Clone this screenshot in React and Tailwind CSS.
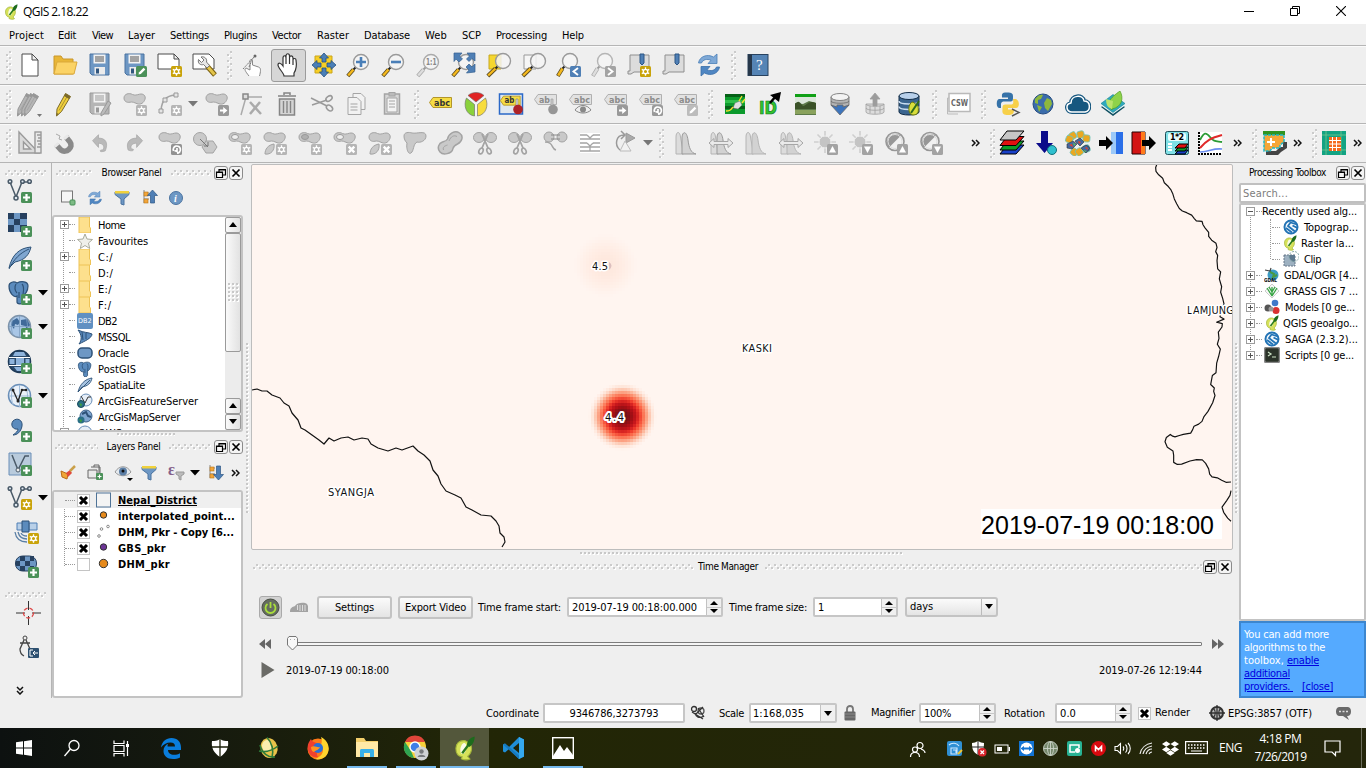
import React, { useLayoutEffect, useRef, useState } from "react";
import { FaDropbox } from "react-icons/fa";

/* Text whose advance is tuned so that it fills a given width */
function T({ w, className = "", children }) {
  const ref = useRef(null);
  const [ls, setLs] = useState(0);
  useLayoutEffect(() => {
    if (!w) return;
    const n = ref.current.getBoundingClientRect().width;
    setLs((w - n) / String(children).length);
  }, []);
  return (
    <span ref={ref} className={"inline-block shrink-0 self-center whitespace-pre " + className} style={{ letterSpacing: ls + "px" }}>
      {children}
    </span>
  );
}

const S = ({ s = 26, w, h, vb, className = "", children }) => (
  <svg width={w || s} height={h || s} viewBox={vb || `0 0 ${w || s} ${h || s}`} className={"shrink-0 " + className} fill="none">
    {children}
  </svg>
);

let gid = 0;
function Grip({ w, h, className = "" }) {
  const [id] = useState(() => "grip" + gid++);
  return (
    <S w={w} h={h} className={className}>
      <pattern id={id} width="6" height="6" patternUnits="userSpaceOnUse">
        <path d="M1 4h2v2H1zM4 1h2v2H4z" fill="#fff" />
        <path d="M0 3h2v2H0zM3 0h2v2H3z" fill="#cbcbcb" />
      </pattern>
      <rect width={w} height={h} fill={`url(#${id})`} />
    </S>
  );
}
function Dots({ w, h, className = "" }) {
  const [id] = useState(() => "dots" + gid++);
  return (
    <S w={w} h={h} className={className}>
      <pattern id={id} width="4" height="4" patternUnits="userSpaceOnUse">
        <path d="M1 1h2v2H1z" fill="#fff" />
        <path d="M0 0h2v2H0z" fill="#c8c8c8" />
      </pattern>
      <rect width={w} height={h} fill={`url(#${id})`} />
    </S>
  );
}
const VGrip = () => <div className="flex h-full w-[14px] shrink-0 items-center justify-center"><Grip w={5} h={29} /></div>;
const FirstGrip = () => <div className="flex h-full w-[12px] shrink-0 items-center justify-end"><Grip w={6} h={29} /></div>;
const More = ({ className = "" }) => (
  <S w={9} h={8} className={className}><path d="M1 1l3 3-3 3M5 1l3 3-3 3" stroke="#111" strokeWidth="1.5" /></S>
);
const Down = ({ c = "#000", className = "" }) => (
  <S w={10} h={6} className={className}><path d="M0 0h10L5 5.5z" fill={c} /></S>
);

/* ---------- toolbar icon parts ---------- */
const GR = "#a3a3a3", GF = "#c9c9c9", BL = "#6d97c4";
const glyphs = {
  star: <g stroke="#fff" strokeWidth="1.300"><circle cx="19.500" cy="19.500" r="2.200" /><path d="M19.500 15.300v2M19.500 21.700v2M15.800 17.400l1.800 1M21.400 20.600l1.800 1M23.200 17.400l-1.800 1M17.600 20.600l-1.800 1" /></g>,
  arrow: <path d="M16 18.400h3.200v-2.400l4.200 3.500-4.200 3.500v-2.400H16z" fill="#fff" />,
  x: <path d="M16.700 16.700l5.600 5.600M22.300 16.700l-5.600 5.600" stroke="#fff" strokeWidth="2.400" />,
  rot: <path d="M16.500 21a3.600 3.600 0 1 1 3.500 2.200M20 18v3.500l-2.500-1" stroke="#fff" strokeWidth="1.700" />,
  up: <path d="M16 22.500h7L19.500 16z" fill="#fff" />,
  down: <path d="M16 16.500h7L19.500 23z" fill="#fff" />,
  pencil: <path d="M16.500 22.500l.6-2.200 4.500-4.500 1.700 1.700-4.500 4.500z" fill="#fff" />,
  plus: <path d="M19.500 16v7M16 19.500h7" stroke="#fff" strokeWidth="2.200" />,
  lt: <path d="M22 16l-4.500 3.500L22 23" stroke="#fff" strokeWidth="1.900" />,
  gt: <path d="M17 16l4.500 3.500L17 23" stroke="#fff" strokeWidth="1.900" />,
};
const Badge = ({ k, c = GR }) => (
  <g><rect x="14" y="14" width="11" height="11" rx="1.500" fill={c} />{glyphs[k]}</g>
);
const Blob = () => <path d="M2 7c0-4 5-5.500 8.500-3.500 2.500 1 4 .5 7-.3 4-1 6.500 1.800 5.500 5s-4 6-8 4.500c-3-1.300-4.500-2-7-1.500C4.500 12 2 10 2 7z" fill={GF} stroke={GR} />;
const Lens = ({ c = "#9a9a9a", h = "#f5b91d", x = 15, y = 10 }) => (
  <g>
    <path d={`M${x - 5} ${y + 5}l-5 5`} stroke={h === "g" ? "#999" : "#222"} strokeWidth="2" />
    <path d={`M${x - 7.500} ${y + 7.500}L1.800 24`} stroke={h === "g" ? "#aaa" : "#5a4a20"} strokeWidth="4" />
    <path d={`M${x - 7.500} ${y + 7.500}L2.200 23.500`} stroke={h === "g" ? "#ddd" : h} strokeWidth="2.400" />
    <circle cx={x} cy={y} r="7.500" fill="#f4f4f4" fillOpacity=".85" stroke={c} strokeWidth="1.400" />
  </g>
);
const Abc = ({ t = "abc", y }) => (
  <g>
    <path d="M1.500 8.500L5 3.500h18.500v10H5z" fill={y ? "#f6dc43" : "#e2e2e2"} stroke={y ? "#b3962a" : "#b0b0b0"} />
    <text x="6" y="11.500" fontSize="9" fontWeight="700" fontFamily="DejaVu Sans, sans-serif" textLength={t === "abc" ? 16 : 11} lengthAdjust="spacingAndGlyphs" fill={y ? "#333" : "#8b8b8b"}>{t}</text>
  </g>
);
const Floppy = ({ g }) => (
  <g>
    <path d="M3 2h19v21H5l-2-2z" fill={g ? "#b5b5b5" : BL} stroke={g ? "#999" : "#4b73a0"} />
    <rect x="6.500" y="2.500" width="12" height="9" fill="#f2f2f2" />
    <path d="M8 5h9M8 7h9M8 9h9" stroke={g ? "#999" : "#555"} />
    <rect x="7.500" y="15" width="10.500" height="7.500" fill="#ececec" /><rect x="9" y="16.500" width="3" height="5" fill={g ? "#999" : "#31567f"} />
  </g>
);
const Pencil = ({ f = "#f0cf3c", s = "#7b6a2b", dx = 0 }) => (
  <g transform={`translate(${dx} 0)`}>
    <path d="M5 18L13.500 2.500l5 3L9.500 20.500 4.500 25z" fill={f} stroke={s} />
    <path d="M16 4L7 19.500" stroke={s} strokeOpacity=".6" /><path d="M13.500 2.500l5 3-1.500 2.500-5-3zM4.500 25l.3-3 1.900 1z" fill={s} />
  </g>
);
const Scissor = () => (
  <g stroke={GR} fill={GF}>
    <ellipse cx="7" cy="7.500" rx="5.500" ry="5" /><ellipse cx="19" cy="7.500" rx="5.500" ry="5" />
    <path d="M10 4l6 14M16 4l-6 14" strokeWidth="1.800" fill="none" />
    <g fill="none" strokeWidth="1.600"><ellipse cx="9" cy="21" rx="2" ry="3" transform="rotate(25 9 21)" /><ellipse cx="17" cy="21" rx="2" ry="3" transform="rotate(-25 17 21)" /></g>
  </g>
);
const Bell = ({ arrows, edge }) => (
  <g>
    <path d="M3 24V7c0-6 4-6 4.500 0l3 17z" fill="#dcdcdc" stroke="#b4b4b4" />
    <path d="M9 24V7c1-7 5-5 6 3 1 8 3 13 8 14z" fill="#d2d2d2" stroke={edge ? "#999" : "#b4b4b4"} />
    {arrows && <path d="M1 13l5-4.500v3h14v-3l5 4.500-5 4.500v-3H6v3z" fill="#eaeaea" stroke="#a6a6a6" />}
  </g>
);
const Sun = () => (
  <g><path d="M12 1v22M1 12h22M4.500 4.500l15 15M19.500 4.500l-15 15" stroke="#cfcfcf" strokeWidth="1.600" /><circle cx="12" cy="12" r="6" fill="#c4c4c4" stroke="#efefef" /></g>
);
const Contrast = () => (
  <g><circle cx="12" cy="11.500" r="9" fill="#f1f1f1" stroke="#969696" strokeWidth="1.600" /><path d="M5.500 18A9 9 0 0 1 18 5.500z" fill="#979797" /><circle cx="12" cy="11.500" r="7" stroke="#ddd" /></g>
);
const Refresh = ({ s = 26 }) => (
  <svg width={s} height={s} viewBox="0 0 26 26" fill="none" className="shrink-0">
    <path d="M2.500 11C3.500 4.500 11 1.500 17.500 5L21 2v9.500h-9l3-3.200C11 6.500 7 7.500 5.500 11z" fill="#7fa9d6" stroke="#4a7fb8" strokeWidth=".8" />
    <path d="M23.500 15C22.500 21.500 15 24.500 8.500 21L5 24v-9.500h9l-3 3.200c4 1.800 8 .8 9.500-2.700z" fill="#4f86c2" stroke="#3a6ea8" strokeWidth=".8" />
  </svg>
);
const Sheet = () => <path d="M4 3h19v17H8l-3 2H2v-3h2z" fill="#dcdcdc" stroke="#8f8f8f" />;
const VShape = ({ c = "#4a5a68" }) => (
  <g stroke={c} strokeWidth="1.500" fill="#dfe8f0"><path d="M3 4l6 15L15 4h7" fill="none" /><circle cx="3" cy="3.500" r="1.800" /><circle cx="9" cy="20" r="2" /><circle cx="15.500" cy="3.500" r="1.800" /><circle cx="22.500" cy="3.500" r="1.800" /></g>
);
const Qgis = ({ s = 16 }) => (
  <svg width={s} height={s} viewBox="0 0 16 16" fill="none" className="shrink-0">
    <path d="M8.500 3C4.500 2.500 2.500 5 2.500 8s1.500 5 4 5.300L6 14.500c2 1 4 1 5.500.2L10 13c2.500-2 3-5 1.800-8z" fill="#d6e25a" stroke="#a3b53a" strokeWidth=".7" />
    <ellipse cx="7.300" cy="8" rx="1.900" ry="3.600" fill="#f9fbe6" transform="rotate(12 7.300 8)" />
    <path d="M6.500 11L12.500 3" stroke="#2a7a1e" strokeWidth="1.500" /><path d="M9.500 5.500C10 2.500 12 1 14.500.3 14.500 3 13.500 5.500 11 7z" fill="#1d6b1d" />
  </svg>
);
const Elephant = () => (
  <g fill="#5b8bbd" stroke="#2d5177" strokeWidth="1.200"><path d="M2 6c0-4 5-5 8-3 4-2 11-2 11 3s-3 9-5 9v7c-1 3-6 2-6 0v-6c-3 2-8-3-8-10z" /><path d="M9 4c-2 3-1 7 1 9M15 4c3 3 1 8 1 11M12 12v6" fill="none" /></g>
);

const row1 = [
  <path d="M5 2h10l6 6v16H5zM15 2v6h6" fill="#fff" stroke="#4a4a4a" />,
  <g><path d="M2 22V4h7l2 3h10v15z" fill="#e8b637" stroke="#c9962a" /><path d="M2 22l3-12h20l-3 12z" fill="#fbd366" stroke="#dba93a" /></g>,
  <Floppy />,
  <g><Floppy /><Badge k="pencil" c="#4b9159" /></g>,
  <g><path d="M1 2h16l5 5v10H1zM17 2v5h5" fill="#fff" stroke="#4a4a4a" /><Badge k="star" c="#c9a30a" /></g>,
  <g><path d="M1 2h16l5 5v10H1z" fill="#fff" stroke="#4a4a4a" /><path d="M15 14l8 9" stroke="#7a6010" strokeWidth="5" /><path d="M15.500 14.500l7 8" stroke="#e3c44a" strokeWidth="3" /><path d="M9 5l3 3-2.500 2.500-3-3c-1 4 2 6 5 5l3.500 3.500 2.500-2.500-3-3.500c1-3-2-6-5.500-5z" fill="#e6e6e6" stroke="#777" /></g>,
];
const row1b = [
  <g><path d="M8 24c-4-5-5-7-3-8l4 2V9c0-2 2-2 2.500 0v4l6 2c3 1 2 5 1 9" fill="#fff" stroke="#888" /><path d="M2 17L14 4M8 15l4-9" stroke="#777" strokeDasharray="2 1" /><circle cx="14" cy="4" r="1.500" fill="#666" /></g>,
  <path d="M8 24c0-3-6-8-6-11s3-2 5 1V6c0-3 3-3 3 0V4c0-3 3.500-3 3.500 0v2c0-3 3.500-2.500 3.500 0v2c0-2 3-2 3 0 1 6 0 10-2 13v3zM10 6v6M13.500 6v6M17 8v5" fill="#fff" stroke="#333" strokeWidth="1.200" />,
  <g><path d="M4 4h17v17H4z" fill="#f7cf25" stroke="#caa51a" /><path d="M13 1l4.500 5H15v4H11V6H8.500zM13 25l-4.500-5H11v-4h4v4h2.500zM1 13l5-4.500V11h4v4H6v2.500zM25 13l-5 4.500V15h-4v-4h4V8.500z" fill="#4a7fb8" stroke="#27517f" strokeWidth=".8" /></g>,
  <g><Lens /><path d="M15 5v10M10 10h10" stroke="#4a7fb8" strokeWidth="2.600" /></g>,
  <g><Lens /><path d="M10 10h10" stroke="#4a7fb8" strokeWidth="2.600" /></g>,
  <g><Lens c="#aaa" h="g" /><text x="10" y="13" fontSize="8" fontWeight="700" fill="#888" fontFamily="DejaVu Sans, sans-serif" textLength="10.500" lengthAdjust="spacingAndGlyphs">1:1</text></g>,
  <g><Lens /><path d="M3 1h8L8.500 4l3 3-3.500 3-3-3L3 9.500zM24 1h-8l2.500 3-3 3L18 9.500l3-3L24 9zM24 20v-8l-3 3-3-3-3 3 3 3-2.500 3z" fill="#4f7fb5" stroke="#33608f" strokeWidth=".7" /></g>,
  <g><path d="M3 3h12v14H3z" fill="#f6d72f" stroke="#c6a720" /><Lens x={17} y={9} /></g>,
  <g><path d="M3 3h12v14H3z" fill="#f6f6f6" stroke="#999" /><Lens x={17} y={9} /></g>,
  <g><Lens x={14} y={9} /><Badge k="lt" c="#4f7fb5" /></g>,
  <g><Lens x={14} y={9} c="#b5b5b5" h="g" /><Badge k="gt" /></g>,
  <g><Sheet /><path d="M14 2h4v9l-2 2-2-2z" fill="#4f7fb5" stroke="#2d5685" /><Badge k="star" c="#c9a30a" /></g>,
  <g><Sheet /><path d="M14 2h4v9l-2 2-2-2z" fill="#4f7fb5" stroke="#2d5685" /></g>,
];
const help = <g><rect x="3" y="2.500" width="20" height="21" fill="#5584b5" stroke="#28425f" /><path d="M3 2.500h4v21H3z" fill="#26374a" /><text x="11" y="18" fontSize="15" fill="#fff" fontFamily="Liberation Serif, serif">?</text></g>;

const row2 = [
  <g><Pencil f="#b5b5b5" s="#979797" dx={-4} /><Pencil f="#b5b5b5" s="#979797" dx={0} /><Pencil f="#b5b5b5" s="#979797" dx={3} /><path d="M20 23h5l-2.500 3z" fill="#777" /></g>,
  <Pencil />,
  <g><Floppy g /><path d="M14 22L21 10l3 2-7 11-3 2z" fill="#bbb" stroke="#999" /></g>,
  <g><Blob /><Badge k="star" c="#b5b5b5" /></g>,
];
const lineStar = <g><path d="M4 19C5 9 9 5 18 4" stroke={GR} strokeWidth="1.500" /><g fill="#e5e5e5" stroke="#999"><path d="M2 18h4v4H2zM6 7h4v4H6zM17 2h4v4h-4z" /></g><Badge k="star" c="#b5b5b5" /></g>;
const row2b = [
  <g><Blob /><Badge k="arrow" c="#999" /></g>,
  <g stroke="#aaa" strokeWidth="1.500"><path d="M2 24L7 6M9 6h14" /><rect x="4" y="3" width="5" height="5" fill="#ddd" stroke="#888" /><path d="M11 11l11 12M21 11L11 23" strokeWidth="2.500" /></g>,
  <g stroke="#858585" strokeWidth="1.500"><path d="M4 5h18M10 4V2h6v2" /><path d="M5.500 8h15v16h-15z" fill="#d5d5d5" /><path d="M9.500 10v12M13 10v12M16.500 10v12" strokeWidth="1.400" /></g>,
  <g stroke="#9a9a9a" strokeWidth="1.500"><path d="M2 7l16 8M3 14l15-5" /><ellipse cx="20" cy="7.500" rx="3.500" ry="2.200" transform="rotate(-35 20 7.500)" /><ellipse cx="20.500" cy="17" rx="3.500" ry="2.400" transform="rotate(40 20.500 17)" /></g>,
  <g fill="#f2f2f2" stroke="#a5a5a5"><path d="M9 2.500h8l4 4v12H9z" /><path d="M4 6.500h9l4 4v13H4zM6.500 13h7M6.500 16h7M6.500 19h7" /></g>,
  <g stroke="#a4a4a4"><rect x="5.500" y="3" width="15" height="20" fill="#d6d6d6" strokeWidth="1.500" /><path d="M8 7h10v14H8z" fill="#f3f3f3" /><path d="M10 10h6M10 13h6M10 16h6" /><rect x="10" y="1.500" width="6" height="3.500" fill="#bbb" /></g>,
];
const row2c = [
  <g transform="translate(0 3)"><Abc y /></g>,
  <g stroke="#666" strokeWidth=".6"><circle cx="13" cy="13" r="11.500" fill="#f4f4f4" stroke="none" /><path d="M13 11L5 4.500c4-4 12-4 16 0z" fill="#e02424" /><path d="M11.500 13.500V25C3 24 0 14 3.500 7z" fill="#8ad13c" /><path d="M14.500 13.500V25C23 24 26 14 22.500 7z" fill="#f7dc3c" /></g>,
  <g><rect x="1.500" y="3" width="23" height="20" fill="#dfe7ef" stroke="#2a68c8" strokeWidth="1.500" /><g transform="translate(1 2) scale(.9)"><Abc t="ab" y /></g><path d="M18 8h2v8h-2z" fill="#ddd" stroke="#777" strokeWidth=".6" /><circle cx="20" cy="18.500" r="4.800" fill="#ad2328" /></g>,
  <g><Abc t="ab" /><path d="M18 8h2v8h-2z" fill="#ccc" stroke="#999" strokeWidth=".6" /><circle cx="20" cy="18.500" r="4.800" fill="#969696" /></g>,
  <g><Abc /><path d="M7 19c4-6 12-6 16 0-4 4-12 4-16 0z" fill="#eee" stroke="#888" /><circle cx="15" cy="18.500" r="3" fill="#888" /></g>,
  <g><Abc /><Badge k="arrow" c="#999" /></g>,
  <g><Abc /><Badge k="rot" c="#999" /></g>,
  <g><Abc /><Badge k="pencil" c="#bcbcbc" /></g>,
];
const Db = ({ c = "#3a648f" }) => (<g fill={c} stroke="#122c47"><path d="M2 5v16c0 4 20 4 20 0V5" /><ellipse cx="12" cy="5" rx="10" ry="3.500" fill="#b8d0ea" /><path d="M2 10c0 4 20 4 20 0M2 15.500c0 4 20 4 20 0" fill="none" stroke="#c8dcf0" strokeWidth="1.500" /></g>);
const row2d = [
  <g><rect x="3" y="3" width="20" height="20" fill="#0c9a2c" /><path d="M3 3h20v3H3zM3 15h20v3H3z" fill="#056016" /><path d="M3 9h20v3H3z" fill="#2fbf4a" /><path d="M11 17l2-5 5-2 2 4-4 4z" fill="#e0e0e0" stroke="#777" strokeWidth=".5" /><path d="M17 10l3-5M20 12l3-4M4 20c3 0 4 0 7-4" stroke="#f5df30" strokeWidth="1.300" /></g>,
  <g><text x="2" y="23" fontSize="17" fontWeight="700" fontFamily="DejaVu Sans, sans-serif" textLength="18" lengthAdjust="spacingAndGlyphs" fill="#2fc52f" stroke="#12761a" strokeWidth=".7">ID</text><path d="M13 12l6-7" stroke="#000" strokeWidth="2.500" /><path d="M13 4l11-3-2 10z" fill="#000" /></g>,
  <g><rect x="3" y="3" width="21" height="21" fill="#5d7a4a" /><path d="M3 3h21v3H3z" fill="#10a016" /><path d="M3 6h21v6l-7-2-6 3-8-1z" fill="#dbe6da" /><path d="M3 13c3-3 4-3 7 1s5-6 14-2v6H3z" fill="#3b5228" /><path d="M3 19h21v4H3z" fill="#8aa25d" /></g>,
  <g stroke="#6a6a6a" strokeWidth=".8"><path d="M4 6v8c0 3 18 3 18 0V6z" fill="#b4b4b4" /><ellipse cx="13" cy="6" rx="9" ry="3.500" fill="#f3f3f3" /><path d="M4 10c0 3 18 3 18 0" /><path d="M4 14l6 2v-2h6v2l6-2-9 10z" fill="#3c74bd" /></g>,
  <g stroke="#a0a0a0" strokeWidth=".8"><path d="M4 13v8c0 3 18 3 18 0v-8z" fill="#dcdcdc" /><path d="M4 13c0 3 18 3 18 0M4 17c0 3 18 3 18 0M8 15v7M13 16v7M18 15v7" /><path d="M13 2l5 6h-3v7h-4V8H8z" fill="#9c9c9c" /></g>,
  <g><Db /><path d="M16 11c-5 0-6 13 0 13 5 0 6-3 5-9z" fill="#d9de3c" stroke="#6c7a10" /><path d="M14 22l8-12" stroke="#2e6b1c" strokeWidth="2" /></g>,
];
const csw = <g><path d="M3 7H1.500v16H12" stroke="#bbb" /><rect x="3" y="2.500" width="21" height="18" fill="#fff" stroke="#b9b9b9" strokeWidth="1.500" /><text x="5" y="14.500" fontSize="8" fontWeight="700" fill="#666" fontFamily="DejaVu Sans, sans-serif" textLength="17" lengthAdjust="spacingAndGlyphs">CSW</text></g>;
const row2e = [
  <g><path d="M12 1.500c-6 0-5 2-5 5h6v1.500H4c-3 0-3 9 0 9h2v-4c0-2 2-2.500 3-2.500h6c3 0 3-1 3-5 0-3-1-4-6-4z" fill="#3672a8" /><path d="M18 8h2c5 0 5 9 1 9h-8v1.500h6c0 4-1 5.500-6 5.500s-6-2-5.500-5.500c0-4 0-5 4-5h5c2 0 2-2 1.500-5.500z" fill="#f7d049" /><path d="M17 18l7 3.500-7 3.500" stroke="#555" strokeWidth="1.500" /></g>,
  <g><circle cx="13" cy="13" r="10" fill="#3b6cab" stroke="#254d82" /><path d="M5 8c3-4 6-5 8-4l-2 4-3 1v4l-3-1zM14 12l3-5 4 2 1 4-4 7-3-3zM7 14l5 2-3 5z" fill="#8eb83d" /></g>,
  <g strokeLinejoin="round"><path d="M7 21c-6 0-7-8-1-9 0-8 12-9 13-2 7 0 7 10 1 11z" fill="#16577f" stroke="#16577f" strokeWidth="4" /><path d="M7 21c-6 0-7-8-1-9 0-8 12-9 13-2 7 0 7 10 1 11z" fill="#16577f" stroke="#fff" strokeWidth="1.500" /></g>,
  <g><path d="M1 16l12 9 12-9-12-8z" fill="#0e4e60" /><path d="M1 14.500l12 8.500 12-8.500-12-8z" fill="#e8f6f8" /><path d="M1 12.500l12-9 12 9-12 9z" fill="#2fa9bd" stroke="#137d90" strokeWidth=".6" /><path d="M12 19C5 13 10 7 20 0c4 7 2 16-8 18z" fill="#8fd24a" stroke="#4d9c1f" strokeWidth=".7" /><path d="M6 8c0 6 2 9 6 10l1-8z" fill="#b9e36c" /></g>,
];
const row3 = [
  <g stroke="#9a9a9a" strokeWidth="1.400"><path d="M2 2v21h20zM6.500 12v7h7z" fill="#dadada" fillRule="evenodd" /><rect x="18" y="2" width="6" height="21" fill="#e9e9e9" /><path d="M20 5h4M21 8h3M20 11h4M21 14h3M20 17h4" /></g>,
  <g><path d="M4.500 15l4.500 5c5 4 13-3 9-8l-4-5" stroke="#8a8a8a" strokeWidth="5.500" /><path d="M2.600 16.700l4-3.500M12 8.800l4.200-3.500" stroke="#e8e8e8" strokeWidth="3" /><path d="M4 4l4 2-1 3 3 1" stroke="#aaa" /></g>,
  <path d="M3 9l7-7v4c8 0 12 5 8 15-8 3-7-2-3-1 3-4 0-8-5-8v5z" fill="#b9b9b9" stroke="#a5a5a5" strokeWidth=".8" transform="translate(3 3) scale(.85)" />,
  <path d="M23 9l-7-7v4C8 6 3 11 6 20c7 3 8-2 4-1-2-4 1-7 6-7v5z" fill="#b9b9b9" stroke="#a5a5a5" strokeWidth=".8" transform="translate(1 3) scale(.85)" />,
  <g><Blob /><Badge k="rot" c="#929292" /></g>,
  <g fill={GF} stroke={GR}><circle cx="8" cy="9" r="6.500" /><path d="M10 17l4-6h7l4 6-4 6h-7z" /><path d="M8 9l8 8m-4-1h4v-4" fill="none" stroke="#777" /></g>,
  <g><Blob /><ellipse cx="8" cy="7" rx="3.500" ry="2.500" fill="#efefef" stroke="#999" /><Badge k="star" c="#b5b5b5" /></g>,
  <g><Blob /><path d="M3 24c0-5 3-9 9-10 1 6-3 11-9 10z" fill={GF} stroke={GR} /><Badge k="star" c="#b5b5b5" /></g>,
  <g><Blob /><ellipse cx="8" cy="7" rx="3.500" ry="2.500" fill="#b0b0b0" stroke="#999" /><Badge k="star" c="#b5b5b5" /></g>,
  <g><Blob /><ellipse cx="8" cy="7" rx="3.500" ry="2.500" fill="#efefef" stroke="#999" /><Badge k="x" c="#b5b5b5" /></g>,
  <g><Blob /><path d="M3 24c0-5 3-9 9-10 1 6-3 11-9 10z" fill={GF} stroke={GR} /><Badge k="x" c="#b5b5b5" /></g>,
  <g><path d="M2 6c0-4 5-4 8-3 5 1 14-3 14 3 0 5-6 7-9 6-4 2-3 9-6 11S4 18 5 13C3 11 2 9 2 6z" fill={GF} stroke={GR} /></g>,
  <g stroke={GR}><path d="M10.500 9C12 3 18 0 22.500 3s2.500 9-2 11-4 3-5 6-9 6-12.500 2-1-9 2.500-10 4-1 5-3z" fill={GF} strokeWidth="1.500" /><path d="M12 11c2-5 5-6 8-4.500M6.500 20c-1-3 1-4 4-5" /></g>,
  <Scissor />, <Scissor />,
  <g fill={GF} stroke={GR}><ellipse cx="7" cy="7" rx="5" ry="5" /><ellipse cx="20" cy="7" rx="5" ry="5" /><path d="M9 5h9M9 9h9" stroke="#888" /><path d="M3 12c9 0 6 7 11 8" fill="none" strokeWidth="1.500" /></g>,
  <g><path d="M3 3h20v20H3z" fill="#fff" /><path d="M3 5h7M16 5h7M3 9h20M3 13h7M16 13h7M3 17h20M3 21h20M10 5l3 3M16 5l-3 3M10 13l3 3M16 13l-3 3M13 17v4" stroke="#a5a5a5" strokeWidth="1.300" /></g>,
];
const rotShape = <g stroke="#999"><path d="M8 20C2 15 4 5 12 5m-3-4l4 4-4 4" strokeWidth="1.500" /><path d="M14 3l9 5-9 5z" fill="#aaa" /><path d="M8 21l5-10 6 10z" fill="#f2f2f2" stroke="#bbb" /></g>;
const row3b = [
  <Bell edge />, <Bell arrows edge />, <Bell />, <Bell arrows />,
  <g><Sun /><Badge k="up" /></g>, <g><Sun /><Badge k="down" /></g>,
  <g><Contrast /><Badge k="up" /></g>, <g><Contrast /><Badge k="down" /></g>,
];
const row3c = [
  <g stroke="#000">{[["#1840c8", 15], ["#0c9c28", 11], ["#e01010", 6.500], ["#c6c6c6", 1]].map(([c, y]) => <path key={y} d={`M1 ${y + 9}L8 ${y}h17l-8 9z`} fill={c} />)}</g>,
  <g><path d="M9 1h7v12h5l-8.500 10L4 13h5z" fill="#0b0b8a" /><circle cx="20" cy="20" r="4.500" fill="#2fc0cf" stroke="#12707b" /></g>,
  <g>{[[8, 5], [16, 4], [22, 8], [5, 9], [10, 22], [15, 22], [22, 19]].map(([x, y], i) => <rect key={i} x={x - 4} y={y - 3} width="7" height="7" rx="2" fill={i === 6 ? "#44658f" : "#eaa820"} stroke="#6fc5b8" strokeWidth=".8" transform={`rotate(${i * 17 - 30} ${x} ${y})`} />)}<path d="M2 14l6-3 4 3-5 5-5-1zM10 11l5-3 4 4-4 4zM16 18l5-3 4 3-4 5z" fill="#4468a0" stroke="#333" strokeWidth=".6" /><path d="M4 15l3-1 1 3zM13 11l3 1-2 2zM20 18l2-1 1 3z" fill="#e8402a" /><path d="M8 13l3 1-2 2zM18 20l2 2 2-1z" fill="#5cb85c" /></g>,
  <g><path d="M13 2h6v22h-6z" fill="#9cc9f8" /><path d="M18 2h7v22h-7z" fill="#2b6fe8" /><path d="M1 10h7V6l7 7-7 7v-4H1z" fill="#000" /></g>,
  <g><path d="M1 2h13v22H1z" fill="#d31414" stroke="#200" /><path d="M10 2h4v22h-4z" fill="#ff7a1a" /><path d="M11 10h7V6l7 7-7 7v-4h-7z" fill="#000" /></g>,
  <g><rect x="1.500" y="1.500" width="23" height="23" rx="2" fill="#7fe0e6" stroke="#1d4e58" /><rect x="4" y="3" width="18" height="8" rx="2" fill="#e9ffff" /><text x="6" y="10" fontSize="8" fontWeight="700" fill="#000" fontFamily="DejaVu Sans, sans-serif" textLength="14">1*2</text><path d="M4 14h4M4 17h4M4 20h4" stroke="#fff" strokeWidth="2" /><path d="M11 24l4-4h9l-3 4z" fill="#1840c8" stroke="#000" /><path d="M11 21l4-4h9l-3 4z" fill="#0c9c28" stroke="#000" /><path d="M11 18l4-4h9l-3 4z" fill="#e01010" stroke="#000" /></g>,
  <g><path d="M2 2h23v22H2z" fill="#fff" /><path d="M2 2v22h23" stroke="#000" strokeWidth="2" strokeDasharray="2 1" /><path d="M3 10c4-8 6-8 10-3s6 4 12 5" stroke="#2c9c36" strokeWidth="1.800" /><path d="M3 18C10 10 14 8 25 5" stroke="#e02a2a" strokeWidth="2" /><path d="M3 22c10 0 12-4 22-3" stroke="#6a8df0" strokeWidth="1.600" /></g>,
];
const scp = <g><path d="M2 1h22v4H2z" fill="#2f9420" /><path d="M5 24v-3h10l4-4h3v-5h4v6l-6 4-3 3H5z" fill="#444" /><path d="M3 5h20v7l-4 3v3h-8l-2 3H3z" fill="#f6a637" stroke="#1fb8c8" strokeWidth="1.500" strokeDasharray="3 1" /><path d="M10 8v8M6 12h8" stroke="#fff" strokeWidth="2" /></g>;
const gridIc = <g><rect x="1" y="1" width="24" height="24" fill="#12a383" /><path d="M1 5h24M1 20h24M5 1v24M20 1v24" stroke="#76c58a" strokeWidth=".8" /><rect x="8" y="7" width="12" height="14" fill="#f66a1c" /><path d="M8 10.500h12M8 14h12M8 17.500h12M11.500 7v14M15.500 7v14" stroke="#fff" /></g>;

const Cells = ({ list, narrow }) => list.map((c, i) => (
  <div key={i} className={"flex shrink-0 items-center justify-center " + (narrow ? "w-[33px]" : "w-[35px]")}><S>{c}</S></div>
));
const Bar = ({ children }) => (
  <div className="flex h-[39px] items-center border-t border-[#b5b5b5] shadow-[inset_0_1px_0_#fafafa]">{children}</div>
);

/* ---------- widgets ---------- */
const WinBtns = () => (
  <div className="flex shrink-0 gap-[1px]">
    {[<path key="a" d="M4 5V2.500h6.500V8H8M1.500 5h6v5.500h-6zM4 3h6.500M1.500 5.500h6" stroke="#000" strokeWidth="1.200" />, <path key="b" d="M2.500 2.500l7 7M9.500 2.500l-7 7" stroke="#000" strokeWidth="1.700" />].map((p, i) => (
      <div key={i} className="flex h-[14px] w-[14px] items-center justify-center rounded-[3px] border border-[#8b8b8b] bg-[#f4f4f4]"><S s={12}>{p}</S></div>
    ))}
  </div>
);
const Spin = ({ className, children }) => (
  <div className={"flex h-[20px] shrink-0 rounded-[2px] border-2 border-[#c6c6c6] bg-white " + className}>
    <div className="flex grow items-center">{children}</div>
    <div className="flex w-[15px] flex-col border-l border-[#c2c2c2] bg-[#f0f0f0]">
      <div className="flex flex-1 items-center justify-center border-b border-[#c8c8c8]"><S w={8} h={4}><path d="M0 4h8L4 0z" fill="#000" /></S></div>
      <div className="flex flex-1 items-center justify-center"><S w={8} h={4}><path d="M0 0h8L4 4z" fill="#000" /></S></div>
    </div>
  </div>
);
const Btn = ({ className, children }) => (
  <div className={"flex shrink-0 items-center rounded-[3px] border-2 border-[#c3c3c3] bg-linear-to-b from-[#fbfbfb] to-[#e4e4e4] " + className}>{children}</div>
);
const Check = ({ on }) => (
  <div className="flex h-[13px] w-[13px] shrink-0 items-center justify-center border border-[#c4c4c4] bg-white">
    {on ? <S s={11}><path d="M2 2l7 7M9 2L2 9" stroke="#000" strokeWidth="3" /></S> : null}
  </div>
);

/* ---------- left tool strip ---------- */
const side = [
  { i: <><VShape /><Badge k="plus" c="#4b9159" /></> },
  { i: <><path d="M1 1h19v19H1z" fill="#6d97c4" /><path d="M1 1h6v6H1zM13 1h7v6h-7zM7 7h6v6H7zM1 13h6v7H1zM13 13h7v7h-7z" fill="#26405f" /><Badge k="plus" c="#4b9159" /></> },
  { i: <><path d="M2 22C5 9 12 2 24 1c-2 8-6 13-16 15z" fill="#7fa6d0" stroke="#2f5378" /><path d="M2 23C7 13 13 7 22 3" stroke="#2f5378" /><Badge k="plus" c="#4b9159" /></> },
  { i: <><Elephant /><Badge k="plus" c="#4b9159" /></>, a: 1 },
  { i: <><circle cx="12.500" cy="12.500" r="11" fill="#a9c6e6" stroke="#7d93aa" strokeWidth="1.500" /><path d="M5 7l5-3 3 4-2 3-3-1-1 5-3-4zM14 6l6-1 3 6-3 4-2-3-4-1z" fill="#3f6a9a" /><path d="M2 12.500h21M12.500 2v21M6 4c-2 6-2 12 0 17M19 4c2 6 2 12 0 17" stroke="#7f9fc2" strokeWidth=".8" /><Badge k="plus" c="#4b9159" /></>, a: 1 },
  { i: <><circle cx="12.500" cy="12.500" r="11" fill="#2b4a6a" stroke="#1e3a57" strokeWidth="1.500" /><path d="M8 3h9l2 4H6zM9 9h8v7H9zM2.500 10h5v5h-5zM18.500 10h4v5h-4zM7 18h10l-2 4h-5z" fill="#8db3dc" /><path d="M2 8.500h21M2 16.500h21" stroke="#fff" /><Badge k="plus" c="#4b9159" /></> },
  { i: <><circle cx="12.500" cy="12.500" r="11" fill="#eaf1f9" stroke="#6a8fb8" strokeWidth="1.500" /><path d="M2 13h21M12.500 2v22M6 4c-2 6-2 12 0 18M19 4c2 6 2 12 0 18" stroke="#9fbbd8" /><path d="M6 7l5 11 4-11h4" stroke="#222" strokeWidth="1.300" /><circle cx="6" cy="7" r="1.500" fill="#222" /><circle cx="11" cy="18" r="1.500" fill="#222" /><circle cx="15" cy="7" r="1.300" fill="#222" /><circle cx="19" cy="7" r="1.300" fill="#222" /><Badge k="plus" c="#4b9159" /></>, a: 1 },
  { i: <><path d="M6 4c4-4 10-1 9 5s-5 9-9 9c3-2 5-4 5-6-5 1-8-4-5-8z" fill="#5b8bbd" stroke="#2d5177" /><Badge k="plus" c="#4b9159" /></> },
  { i: <><path d="M2 2h22v22H2z" fill="#b9cbdc" stroke="#6a8fb8" /><path d="M5 4l6 15 7-14h4" stroke="#4a5a68" strokeWidth="1.500" /><circle cx="11" cy="19" r="2" fill="#eee" stroke="#4a5a68" /><Badge k="plus" c="#4b9159" /></> },
  { i: <><VShape /><Badge k="star" c="#c9a30a" /></>, a: 1 },
  { i: <><path d="M3 4h6v7H3zM15 4h8v7h-8z" fill="#b9d0e8" stroke="#4f7fb5" /><path d="M8 2h7v11H8z" fill="#5b8bbd" stroke="#2d5177" /><path d="M1 13c1 7 5 10 12 10M4 13c1 4 4 7 9 7M7 14c1 2 3 3 6 3" stroke="#5a7fa5" strokeWidth="1.300" /><Badge k="star" c="#c9a30a" /></>, s: 1 },
  { i: <><rect x="1.500" y="3" width="21" height="15" rx="7" fill="#6d97c4" stroke="#26405f" /><path d="M6 3h5v5H6zM16 3h4v5h-4zM2 8h4v5H2zM11 8h5v5h-5zM6 13h5v5H6zM16 13h4v4h-4z" fill="#26405f" /><Badge k="plus" c="#4b9159" /></>, s: 1 },
];
const SideBar = () => (
  <div className="flex h-full w-[51px] shrink-0 flex-col pt-[7px]">
    <Grip w={41} h={6} className="ml-[5px] -mb-[2px]" />
    {side.map((e, n) => (
      <div key={n} className={"flex h-[34.100px] shrink-0 items-center " + (e.s ? "pl-[14px]" : "pl-[7px]")}>
        <S>{e.i}</S>
        {e.a && <Down className="ml-[5px]" />}
      </div>
    ))}
    <div className="flex h-[21px] shrink-0 items-center"><Grip w={41} h={6} className="ml-[5px] mt-[2px]" /></div>
    <S w={26} h={26} className="ml-[16px] -mt-[4px]"><path d="M12.500 1v9M12.500 16v9M0 13h9M16 13h9" stroke="#333" /><circle cx="12.500" cy="13" r="5" stroke="#d44" strokeWidth="1.300" strokeDasharray="4 2" /></S>
    <S w={26} h={26} className="ml-[16px] mt-[8px]"><circle cx="9" cy="4" r="2" stroke="#444" /><path d="M8 6L4 15c0 4 2 6 4 7M10 6l4 9M4 9h10" stroke="#444" strokeWidth="1.300" /><rect x="12" y="14" width="11" height="10" rx="1" fill="#2d5070" /><path d="M17 16h-3v6h3M22 19h-5m2-2l-2 2 2 2" stroke="#fff" /></S>
    <S w={8} h={9} className="ml-[16px] mt-[26px]"><path d="M1 1l3 3 3-3M1 5l3 3 3-3" stroke="#111" strokeWidth="1.500" /></S>
  </div>
);

/* ---------- trees ---------- */
const PlusBox = ({ minus }) => <S s={9}><rect x=".5" y=".5" width="8" height="8" fill="#fff" stroke="#9c9c9c" /><path d={minus ? "M2 4.500h5" : "M2 4.500h5M4.500 2v5"} stroke="#555" /></S>;
const folder = <path d="M2 0h10.500v10l1 1v5H2z" fill="#fde08d" stroke="#eec356" />;
const arc = <g><circle cx="9" cy="7" r="6" fill="#e6eef7" stroke="#6a8fb8" /><path d="M4 3l4 7 3-6h3" stroke="#333" /><circle cx="4" cy="11" r="3.500" fill="#2a6f86" stroke="#174a5a" /><path d="M2 10l3 1-1 3z" fill="#3da03d" /></g>;
const browser = [
  ["Home", 27, folder, 1], ["Favourites", 50, <path d="M8 1l2 5 5.500.5-4 3.500 1.200 5.500L8 12.500l-4.700 3L4.500 10 .5 6.500 6 6z" fill="#eff0ea" stroke="#a9ab9d" />, 0],
  ["C:/", 15, folder, 1], ["D:/", 15, folder, 0], ["E:/", 14, folder, 1], ["F:/", 14, folder, 1],
  ["DB2", 19, <g><rect width="16" height="16" rx="2" fill="#6090c2" /><text x="1" y="10" fontSize="6.500" fill="#fff" fontFamily="DejaVu Sans, sans-serif">DB2</text></g>, 0],
  ["MSSQL", 32, <path d="M1 1c6 3 10 2 14 4 0 4-7 7-13 10 3-4 3-9-1-14zM5 3l1 8M9 4v6" fill="#5b8bbd" stroke="#2d5177" />, 0],
  ["Oracle", 31, <rect x="1" y="3" width="14" height="10" rx="4" fill="#6d97c4" stroke="#2d5177" strokeWidth="1.500" />, 0],
  ["PostGIS", 38, <g transform="scale(.66)"><Elephant /></g>, 0],
  ["SpatiaLite", 47, <path d="M1 15C3 7 8 2 15 1c-1 5-4 8-10 9zM1 15L13 3" fill="#a8c4e2" stroke="#2f5378" strokeWidth=".9" />, 0],
  ["ArcGisFeatureServer", 100, arc, 0],
  ["ArcGisMapServer", 82, <g><circle cx="9" cy="7" r="6" fill="#7ea5cf" stroke="#3d618a" /><path d="M5 5l4-2 2 4 3 1" stroke="#2d5177" strokeWidth="2" /><circle cx="4" cy="11" r="3.500" fill="#2a6f86" /><path d="M2 10l3 1-1 3z" fill="#3da03d" /></g>, 0],
  ["OWS", 24, <circle cx="8" cy="8" r="7" fill="#e6eef7" stroke="#6a8fb8" />, 1],
];
const PanelTitle = ({ children, w, gl, gr }) => (
  <div className="flex h-[17px] w-full items-center">
    <div className="flex grow items-center justify-center"><Grip w={gl} h={6} /><div className="grow text-center text-[10px]"><T w={w}>{children}</T></div><Grip w={gr} h={6} /></div>
    <div className="ml-[3px]"><WinBtns /></div>
  </div>
);
const Funnel = () => <S s={16}><path d="M1 2h14v2.500L10 9v6l-3-1V9L1 4.500z" fill="#6d97c4" stroke="#4b73a0" /><path d="M1 1h14v2.500H1z" fill="#f0d13c" /></S>;
const TreeArrow = ({ up }) => <S s={17}><path d="M3 1v13M3 4h5M3 10h5" stroke="#888" /><rect x="3" y="3" width="4" height="4" fill="#f3a53a" stroke="#b97717" strokeWidth=".6" /><rect x="3" y="10" width="4" height="4" fill="#f3a53a" stroke="#b97717" strokeWidth=".6" /><path d={up ? "M11.500 1l5 5.500h-3V14h-4V6.500h-3z" : "M11.500 16l5-5.500h-3V2h-4v8.500h-3z"} fill="#4f7fb5" stroke="#2d5685" strokeWidth=".7" /></S>;
const ScrollB = ({ children, className }) => <div className={"flex w-[16px] shrink-0 items-center justify-center rounded-[2px] border border-[#9a9a9a] bg-linear-to-r from-[#fafafa] to-[#e2e2e2] " + className}>{children}</div>;
const Up = () => <S w={8} h={5}><path d="M0 5h8L4 0z" fill="#000" /></S>;
const Dn = () => <S w={8} h={5}><path d="M0 0h8L4 5z" fill="#000" /></S>;

const LeftDock = () => (
  <div className="flex h-full w-[193px] shrink-0 flex-col border-l border-[#b5b5b5] pr-[1px] pt-[1px]">
    <div className="pl-[4px]"><PanelTitle w={60} gl={36} gr={40}>Browser Panel</PanelTitle></div>
    <div className="flex h-[34px] items-center gap-[11px] pl-[8px]">
      <S s={16}><rect x="1.500" y="1" width="11" height="11" fill="#f6f6f6" stroke="#777" /><rect x="10" y="10" width="5" height="5" rx="1" fill="#7dbb85" stroke="#4b9159" /></S>
      <Refresh s={16} /><Funnel /><TreeArrow up />
      <S s={16} className="-ml-[1px]"><circle cx="8" cy="8" r="6.500" fill="#6d97c4" stroke="#4b73a0" /><text x="6" y="12" fontSize="10" fontStyle="italic" fontWeight="700" fill="#fff" fontFamily="Liberation Serif, serif">i</text></S>
    </div>
    <div className="flex h-[217px] overflow-hidden rounded-[3px] border-2 border-[#c3c3c3] bg-white">
      <div className="relative h-full grow overflow-hidden">
        <div className="absolute top-[8px] left-[9px] h-[220px] border-l border-dotted border-[#999]" />
        {browser.map(([n, w, ic, p], i) => (
          <div key={i} className="relative flex h-[16px] items-center">
            <div className="flex w-[15px] justify-end pl-[5px]">{p ? <PlusBox /> : <div className="w-[5px]" />}</div>
            <div className="h-0 w-[6px] border-t border-dotted border-[#999]" />
            <S s={16} className="ml-[2px]">{ic}</S>
            <T w={w} className="ml-[5px] pt-[2px]">{n}</T>
          </div>
        ))}
      </div>
      <div className="flex w-[16px] flex-col bg-[#ececec]">
        <ScrollB className="h-[16px]"><Up /></ScrollB>
        <ScrollB className="h-[119px]"><Dots w={11} h={19} /></ScrollB>
        <div className="grow" />
        <ScrollB className="h-[16px]"><Up /></ScrollB>
        <ScrollB className="h-[16px]"><Dn /></ScrollB>
      </div>
    </div>
    <div className="flex h-[7px] items-center justify-center"><Dots w={58} h={3} className="-ml-[4px]" /></div>
    <div className="pl-[3px]"><PanelTitle w={54} gl={43} gr={42}>Layers Panel</PanelTitle></div>
    <div className="flex h-[35px] items-center pl-[8px]">
      <S s={17}><path d="M1 7l7 3-1 5-5-2z" fill="#f0a637" stroke="#b96c17" /><path d="M6 9l4-3 2 3-4 4z" fill="#e04a3a" /><path d="M10 7l5-5" stroke="#caa04a" strokeWidth="2.500" /></S>
      <S s={18} className="ml-[10px]"><path d="M1 6h9v8H1zM4 3h9v10M7 3V1h5v12" fill="#e9e9e9" stroke="#666" /><rect x="9" y="9" width="7" height="7" rx="1" fill="#4b9159" /><path d="M12.500 10.500v4M10.500 12.500h4" stroke="#fff" strokeWidth="1.200" /></S>
      <S s={20} className="ml-[9px]"><path d="M1 9c4-7 12-7 16 0-4 5-12 5-16 0z" fill="#e4e9ee" stroke="#999" /><circle cx="9" cy="8.500" r="4" fill="#5b7ea5" /><circle cx="9" cy="8" r="1.500" fill="#111" /><path d="M13 15h6l-3 3z" fill="#000" /></S>
      <div className="ml-[7px]"><Funnel /></div>
      <S s={17} className="ml-[11px]"><text x="0" y="11" fontSize="16" fill="#84608a" fontWeight="700" fontFamily="Liberation Serif, serif">ε</text><path d="M8 8h8v2l-3 2v4l-2-1v-3L8 10z" fill="#bbb" stroke="#999" /></S>
      <Down className="ml-[5px]" /><div className="ml-[7px]"><TreeArrow /></div><More className="ml-[7px]" />
    </div>
    <div className="relative h-[208px] rounded-[3px] border-2 border-[#c3c3c3] bg-white">
      <div className="absolute top-0 left-[10px] h-[74px] border-l border-dotted border-[#999]" />
      {[
        ["Nepal_District", 79, 1, <rect x="1.500" y="1" width="14" height="14" fill="#f4f4f4" stroke="#4f7397" />],
        ["interpolated_point...", 117, 1, <circle cx="8.500" cy="7" r="3.200" fill="#e68a1c" stroke="#333" />],
        ["DHM, Pkr - Copy [6...", 116, 1, <g stroke="#888" fill="#fff"><circle cx="4" cy="12" r="1.300" /><circle cx="6.500" cy="5" r="1.300" /><circle cx="13" cy="2.500" r="1.300" /></g>],
        ["GBS_pkr", 48, 1, <circle cx="8.500" cy="7" r="3.200" fill="#6c3596" stroke="#333" />],
        ["DHM_pkr", 52, 0, <circle cx="8.500" cy="7.500" r="4.200" fill="#e68a1c" stroke="#333" />],
      ].map(([n, w, on, ic], i) => (
        <div key={n} className={"relative flex h-[16px] items-center " + (i === 0 ? "bg-[#efefef]" : "")}>
          <div className="ml-[11px] mr-[2px] h-0 w-[10px] border-t border-dotted border-[#999]" />
          <Check on={on} />
          <S s={17} className="ml-[5px]">{ic}</S>
          <T w={w} className={"ml-[6px] pt-[1px] font-bold " + (i === 0 ? "underline" : "")}>{n}</T>
        </div>
      ))}
    </div>
  </div>
);

/* ---------- map ---------- */
const ramp = [[255, 245, 240], [254, 224, 210], [252, 187, 161], [252, 146, 114], [251, 106, 74], [239, 59, 44], [203, 24, 29], [165, 15, 21], [103, 20, 25]];
const heat = (cx, cy, r, k) => {
  const out = [];
  for (let y = cy - 36; y <= cy + 36; y += 3)
    for (let x = cx - 36; x <= cx + 36; x += 3) {
      const d = Math.hypot(x - cx, y - cy) / r;
      if (d >= 1) continue;
      const v = Math.pow(1 - d * d, 1.6) * k * 8, a = Math.min(7, Math.floor(v)), f = v - a;
      const c = ramp[a].map((q, n) => Math.round(q + (ramp[a + 1][n] - q) * f));
      out.push(<rect key={x + "_" + y} x={x - 1.5} y={y - 1.5} width="3" height="3" fill={`rgb(${c})`} shapeRendering="crispEdges" />);
    }
  return out;
};
const lab = { fontFamily: "DejaVu Sans Condensed, DejaVu Sans, sans-serif", fontSize: 11, fill: "#111", stroke: "#fff", strokeWidth: 3, paintOrder: "stroke", strokeLinejoin: "round" };
const MapView = () => (
  <div className="h-[386px] w-[982px] shrink-0 rounded-[2px] border border-[#bdbdbd] bg-[#fff5f0]">
    <svg width="980" height="384" viewBox="252 165 980 384" fill="none">
      {heat(605.5, 265.5, 33, 0.08)}
      {heat(622.5, 416.5, 34, 1)}
      <path d="M609 262q5 3.500 0 8z" fill="#cdaeb0" fillOpacity=".7" />
      <g stroke="#111" strokeWidth="1.200" strokeLinejoin="round">
        <path d="M252 390L257 389 262 391 267 391 272 395 280 398 284 403 289 406 292 413 298 420 301 428 305 430 312 435 319 440 324 444 329 438 334 441 341 438 348 437 354 440 362 438 368 439 371 444 378 448 388 451 396 448 402 450 413 446 418 451 424 455 430 461 433 470 438 476 441 484 446 491 455 495 461 498 466 507 472 510 481 515 491 516 496 521 499 526 500 533 504 537 505 542 502 547" />
        <g transform="translate(970 160) scale(.33333 .34436)" strokeWidth="3.500">
          <path d="M560 14L557 22 558 33 566 43 578 53 583 66 595 77 603 87 608 97 613 113 620 127 628 141 637 148 650 153 665 160 673 170 679 177 696 178 699 188 705 197 716 210 716 222 725 233 738 242 741 254 737 266 743 277 741 292 743 316 752 325 748 345 755 368 752 384 758 402 762 418 755 435 750 455 762 462 740 471 757 475 756 485 745 500 747 518 742 535 751 549 746 570 740 590 738 618 727 626 722 652 733 662 731 672 735 684 728 705 714 730 702 745 696 759 686 767 672 773 668 783 662 793 640 797 628 800 615 804 608 802 601 797 589 806 585 818 592 834 609 845 611 858 611 878 622 884 635 883 660 874 680 870 697 871 707 881 716 897 719 912 726 920 742 923 755 930 768 936 783 935M783 960L780 974 770 989 756 1008 761 1023 773 1040 783 1049" />
        </g>
      </g>
      <g style={lab}>
        <text x="592" y="270" textLength="16">4.5</text>
        <text x="605" y="421" textLength="19" strokeWidth="4">4.4</text>
        <text x="742" y="352" textLength="30">KASKI</text>
        <text x="328" y="496" textLength="46">SYANGJA</text>
        <text x="1187" y="314" textLength="47">LAMJUNG</text>
      </g>
      <rect x="981" y="509" width="241" height="30" fill="#fff" />
      <text x="981" y="534" fontSize="25" fill="#000" fontFamily="Liberation Sans, Arial, sans-serif" textLength="233">2019-07-19 00:18:00</text>
    </svg>
  </div>
);

const TimeManager = () => (
  <div className="flex w-[982px] flex-col">
    <div className="flex h-[8px] items-center justify-center"><Dots w={324} h={3} className="-mt-[2px]" /></div>
    <div className="flex h-[17px] items-center pr-[1px]">
      <Grip w={441} h={6} className="ml-[2px]" /><T w={60} className="ml-[4px] text-[10px]">Time Manager</T><Grip w={438} h={6} className="ml-[7px] mr-auto" /><WinBtns />
    </div>
    <div className="mt-[20px] flex h-[24px] items-center pl-[8px]">
      <div className="flex h-[23px] w-[23px] items-center justify-center rounded-[3px] border border-[#aaa] bg-[#d2d2d2]"><S s={19}><circle cx="9.500" cy="9.500" r="8.500" fill="#656d60" stroke="#454b41" /><path d="M6.500 6a5 5 0 1 0 6 0M9.500 4v6" stroke="#a9dd3c" strokeWidth="1.800" /></S></div>
      <S s={19} className="ml-[8px]"><path d="M0 14c0-4 2-5 5-6 2-4 10-4 12-2l1 2v6H0z" fill="#a2a2a2" /><path d="M7.500 7v5M10 7v6M12.500 7v6M15 7v6" stroke="#ddd" /></S>
      <Btn className="ml-[8px] h-[23px] w-[75px] justify-center pt-[1px]"><T w={39}>Settings</T></Btn>
      <Btn className="ml-[6px] h-[23px] w-[75px] justify-center pt-[1px]"><T w={61}>Export Video</T></Btn>
      <T w={83} className="ml-[5px] pt-[2px]">Time frame start:</T>
      <Spin className="ml-[6px] w-[156px]"><T w={125} className="ml-[3px] pt-[1px]">2019-07-19 00:18:00.000</T></Spin>
      <T w={78} className="ml-[6px] pt-[2px]">Time frame size:</T>
      <Spin className="ml-[6px] w-[85px]"><T className="ml-[3px] pt-[1px]">1</T></Spin>
      <Btn className="-mt-[1px] ml-[7px] h-[20px] w-[93px]"><T w={23} className="ml-[3px]">days</T><div className="ml-auto flex h-full w-[15px] items-center justify-center border-l border-[#bbb]"><Dn /></div></Btn>
    </div>
    <div className="mt-[16px] flex h-[16px] items-center pl-[8px]">
      <S w={12} h={10} className="mt-[1px]"><path d="M6 0v10L0 5zM12 0v10L6 5z" fill="#666" /></S>
      <div className="relative ml-[16px] flex h-[16px] w-[915px] items-center">
        <div className="ml-[4px] mt-[1px] h-[4px] grow rounded-[1px] border border-[#7d7d7d] bg-[#f5f5f5]" />
        <S w={12} h={15} className="absolute top-[1px] left-0"><path d="M2 .5h7l1.500 2V9L5.500 14 .5 9V2.500z" fill="#f8f8f8" stroke="#777" /><path d="M3 3.500h1M7 3.500h1" stroke="#aaa" /></S>
      </div>
      <S w={12} h={10} className="ml-[10px] mt-[1px]"><path d="M0 0v10l6-5zM6 0v10l6-5z" fill="#666" /></S>
    </div>
    <div className="mt-[10px] flex h-[18px] items-center pl-[10px] pr-[31px]">
      <S w={14} h={16}><path d="M.5 0v16l13-8z" fill="#6a6a66" /></S>
      <T w={103} className="ml-[11px] pt-[1px]">2019-07-19 00:18:00</T><T w={103} className="ml-auto pt-[1px]">2019-07-26 12:19:44</T>
    </div>
  </div>
);

/* ---------- processing toolbox ---------- */
const saga = <g><circle cx="8" cy="8" r="6.500" stroke="#2273b5" strokeWidth="2" fill="#f4f9fd" /><path d="M14 5.500L7.500 3.500 5 7l7 5.500M9.500 6.500l5 2.500M3 9l6 4.500" stroke="#2273b5" strokeWidth="1.800" /></g>;
const RightDock = () => (
  <div className="ml-auto flex h-full w-[127px] shrink-0 flex-col pt-[1px]">
    <div className="flex h-[17px] items-center pl-[10px] text-[10px]"><T w={77}>Processing Toolbox</T><div className="ml-auto mr-[1px]"><WinBtns /></div></div>
    <div className="mt-[2px] flex h-[20px] items-center rounded-[2px] border-2 border-[#c0c0c0] bg-white pl-[2px] text-[#7c7c7c]"><T w={45} className="pt-[1px]">Search...</T></div>
    <div className="relative h-[418px] rounded-[2px] border-2 border-[#c3c3c3] bg-white">
      <div className="absolute top-[9px] left-[9px] h-[140px] border-l border-dotted border-[#999]" />
      <div className="absolute top-[14px] left-[29px] h-[40px] border-l border-dotted border-[#999]" />
      <div className="-mt-[2px] flex flex-col">
      {[
        ["Recently used alg...", 95, 0, 1, null, 0], ["Topograp...", 54, 1, 0, saga, 7], ["Raster la...", 53, 1, 0, "q", 5], ["Clip", 17, 1, 0, <g><path d="M1 4h11v11H1z" fill="#9db1c1" stroke="#678" strokeDasharray="2 1" /><path d="M6 4h6v7c-4 0-6-3-6-7z" fill="#5c788e" /><circle cx="11" cy="5.500" r="5" stroke="#8aa" strokeDasharray="2 1" /></g>, 7],
        ["GDAL/OGR [4...", 74, 0, 1, <g><circle cx="9" cy="8" r="5.500" fill="#3b9bc4" /><path d="M6 5l4 2-1 3 4-2" stroke="#4a9a42" strokeWidth="2" /><path d="M1 3l5 1 1-3" stroke="#444" strokeWidth="1.200" /><text x="0" y="15" fontSize="5.500" fontWeight="700" fill="#111" fontFamily="DejaVu Sans, sans-serif" textLength="13" lengthAdjust="spacingAndGlyphs">GDAL</text></g>, 5],
        ["GRASS GIS 7 ...", 74, 0, 1, <g><path d="M8 1l7 7-7 7-7-7z" fill="#f6f8f6" stroke="#ccc" /><path d="M8 13L3 5M8 13l5-8M8 13V4M8 9l-3-5M8 9l3-5" stroke="#37a344" strokeWidth="1.300" /></g>, 5],
        ["Models [0 ge...", 70, 0, 1, <g><circle cx="4" cy="9" r="3.500" fill="#555" /><circle cx="11" cy="4" r="3.300" fill="#3f78c9" /><circle cx="12" cy="11.500" r="3.500" fill="#d93030" /><circle cx="7" cy="10" r="2.500" fill="#999" /></g>, 7],
        ["QGIS geoalgo...", 75, 0, 1, "q", 5], ["SAGA (2.3.2)...", 73, 0, 1, saga, 7],
        ["Scripts [0 ge...", 69, 0, 1, <g><rect x=".5" y=".5" width="15" height="15" rx="2" fill="#2b3329" stroke="#888" strokeWidth="1.500" /><path d="M4 5l3 2-3 2M8 10h4" stroke="#cfe6c8" strokeWidth="1.200" /></g>, 7],
      ].map(([n, w, lv, p, ic, g], i) => (
        <div key={i} className="relative flex h-[16px] shrink-0 items-center pl-[5px]">
          <div className="flex w-[9px] shrink-0">{p ? <PlusBox minus={i === 0} /> : null}</div>
          {lv ? <div className="ml-[17px] h-0 w-[8px] shrink-0 border-t border-dotted border-[#999]" /> : <div className="ml-[1px] h-0 w-[6px] shrink-0 border-t border-dotted border-[#999]" />}
          {ic === "q" ? <div className="ml-[2px] mr-[-1px]"><Qgis s={16} /></div> : ic ? <S s={16} className={lv ? "ml-[3px]" : "ml-[2px]"}>{ic}</S> : null}
          <div className={"flex whitespace-nowrap pt-[2px] " + (i === 0 ? "ml-0" : g === 7 ? "ml-[5px]" : "ml-[4px]")}><T w={w}>{n}</T></div>
        </div>
      ))}
      </div>
    </div>
    <div className="flex h-[77px] flex-col items-start border-2 border-[#3c86cf] bg-[#55aaff] pt-[5px] pl-[3px] leading-[13px] text-white">
      <div className="flex"><T w={85}>You can add more</T></div>
      <div className="flex"><T w={81}>algorithms to the</T></div>
      <div className="flex"><T w={43}>toolbox, </T><T w={32} className="text-[#0000e0] underline">enable</T></div>
      <div className="flex"><T w={46} className="text-[#0000e0] underline">additional</T></div>
      <div className="flex"><T w={49} className="text-[#0000e0] underline">providers. </T><T w={31} className="ml-[9px] text-[#0000e0] underline">[close]</T></div>
    </div>
  </div>
);

const StatusBar = () => (
  <div className="flex h-[30px] shrink-0 items-center pl-[486px]">
    <T w={53} className="pt-[2px]">Coordinate</T>
    <div className="ml-[4px] flex h-[20px] w-[142px] items-center justify-center rounded-[2px] border-2 border-[#c6c6c6] bg-white"><T w={89} className="pt-[2px]">9346786,3273793</T></div>
    <S s={16} className="ml-[5px]"><circle cx="4" cy="4" r="2.500" stroke="#333" strokeWidth="1.300" /><circle cx="11" cy="6" r="3" stroke="#555" strokeWidth="1.300" /><path d="M2 7l11 7M5 8c1 4 4 6 9 3M13 2L6 9M8 3l6 9" stroke="#333" strokeWidth="1.200" /></S>
    <T w={25} className="ml-[13px] pt-[2px]">Scale</T>
    <div className="ml-[5px] flex h-[20px] w-[88px] items-center rounded-[2px] border-2 border-[#c6c6c6] bg-white"><T w={51} className="ml-[2px] pt-[1px]">1:168,035</T><div className="ml-auto flex h-full w-[15px] items-center justify-center border-l border-[#c2c2c2] bg-[#f0f0f0]"><Dn /></div></div>
    <S w={14} h={16} className="ml-[6px]"><path d="M4 7V4c0-4 6-4 6 0v3" stroke="#777" strokeWidth="1.800" /><rect x="1.500" y="6.500" width="11" height="9" rx="1" fill="#666" /><path d="M2 9h10M2 12h10" stroke="#888" /></S>
    <T w={44} className="ml-[14px]">Magnifier</T>
    <Spin className="ml-[4px] w-[77px]"><T w={27} className="ml-[3px] pt-[1px]">100%</T></Spin>
    <T w={41} className="ml-[8px] pt-[2px]">Rotation</T>
    <Spin className="ml-[10px] w-[77px]"><T w={16} className="ml-[3px] pt-[1px]">0.0</T></Spin>
    <div className="ml-[6px]"><Check on /></div>
    <T w={35} className="ml-[4px]">Render</T>
    <S s={16} className="ml-[19px]"><circle cx="8" cy="8" r="6" fill="#bbb" stroke="#333" strokeWidth="2" /><path d="M8 0v16M0 8h16M4 3c3 3 3 7 0 10M12 3c-3 3-3 7 0 10" stroke="#333" strokeWidth="1.300" /></S>
    <T w={84} className="ml-[3px] pt-[2px]">EPSG:3857 (OTF)</T>
    <S w={17} h={15} className="ml-[23px]"><path d="M4 1h9c4 0 4 9 0 9h-1l2 4-6-4H4c-4 0-4-9 0-9z" fill="#6a6a6a" /><path d="M4 5.500h2M7.500 5.500h2M11 5.500h2" stroke="#ddd" strokeWidth="1.700" /></S>
  </div>
);

/* ---------- taskbar ---------- */
const vscode = <g><path d="M17 1l5 2.500v17L17 23 7 13l-4 3.500-2-1V8.500l2-1L7 11z" fill="#1f8fd8" /><path d="M17 7v10l-6-5z" fill="#202406" /><path d="M1 8.500l2-1 14 12V23z" fill="#1679bf" /><path d="M17 1l5 2.500v17L17 23z" fill="#35a9ee" /></g>;
const tasks = [
  { i: <S s={16}><path d="M0 2.300l7-1v6.200H0zM8 1.200L16 0v7.500H8zM0 8.500h7v6.200l-7-1zM8 8.500h8V16l-8-1.200z" fill="#fff" /></S>, w: "w-[48px]" },
  { i: <S s={18}><circle cx="11" cy="6.500" r="5" stroke="#fff" strokeWidth="1.300" /><path d="M7.500 10L1.500 17" stroke="#fff" strokeWidth="1.300" /></S>, w: "w-[48px]" },
  { i: <S s={17}><path d="M1 .5v3h10v-3M1 16.500v-3h10v3M1 5.500h10v6H1zM14.500 1v15" stroke="#fff" strokeWidth="1.200" /><path d="M13 4h3v3h-3z" fill="#fff" /></S>, w: "w-[50px]" },
  { i: <S s={22}><path d="M1 10.500C2 4.500 6 1 11.500 1 17.500 1 21 5 21 10.500V13H8c0 3 2.500 4.800 6 4.800 2.300 0 4.300-.6 6-1.600v4.300c-2 1-4.500 1.500-7 1.500C7 22 3.500 18.500 3.500 14c0-3.500 1.800-6 5-7.500C7.300 7.500 7.700 8.500 7.600 9.500H15c0-2.500-1.500-4-4.500-4-4 0-7.500 2-9.500 5z" fill="#0a7ddc" /></S> },
  { i: <S s={18}><path d="M9 0c3 2 5 2 8 2 1 7-2 12-8 16C3 14 0 9 1 2c3 0 5 0 8-2z" fill="#fff" /><path d="M9 0v18M1 8h16" stroke="#1d210a" strokeWidth="1.300" /></S> },
  { i: <S s={24}><ellipse cx="12" cy="12" rx="8.500" ry="10" fill="#e8c24a" transform="rotate(-15 12 12)" /><ellipse cx="10" cy="10" rx="5" ry="6" fill="#fbeeae" /><path d="M2 15c8 2 14-1 19-5M10 1.500c5 5 7 13 5 20M3 9c2 8 8 13 15 12" stroke="#2e7b3a" strokeWidth="1.600" /></S> },
  { i: <S s={24}><circle cx="12" cy="13" r="10.500" fill="#ff7a18" /><path d="M15 1c8 4 10 13 5 19-3 3-8 4-11 3 8-3 10-9 6-14 1-3 1-5 0-8z" fill="#ffd42e" /><path d="M2 14C1 8 3 6 5 3c1 3 3 3 6 4 2 4-2 10 1 14-5 1-9-2-10-7z" fill="#f0402e" /><circle cx="12" cy="12" r="5" fill="#2b6fd6" /><path d="M5 11c4-2 6 1 9 0-1 3-4 3-6 5-2 0-3-3-3-5z" fill="#ff9420" /></S> },
  { i: <S s={22}><path d="M0 1h8l2 3h12v15H0z" fill="#f3cf6c" /><path d="M0 5h22v15H0z" fill="#ffe9a6" /><path d="M4 20v-6c0-2 1-2 2-2h10c1 0 2 0 2 2v6h-4v-4H8v4z" fill="#38b0e8" /></S>, u: 1 },
  { i: <S s={26}><circle cx="12" cy="12" r="11" fill="#f6cf3a" /><path d="M2 7a11 11 0 0 1 20 0H12z" fill="#e0453a" /><path d="M2 7l6 9 3 7A11 11 0 0 1 2 7z" fill="#2fa351" /><circle cx="12" cy="12" r="5" fill="#3f7fe8" stroke="#fff" strokeWidth="1.400" /><circle cx="18.500" cy="18.500" r="7" fill="#cfd2d4" /><circle cx="18.500" cy="16.500" r="2.200" fill="#76797c" /><path d="M14.500 22c1-3 7-3 8 0z" fill="#76797c" /></S>, u: 1 },
  { i: <Qgis s={25} />, q: 1 },
  { i: <S s={24}>{vscode}</S> },
  { i: <S s={22}><rect x=".7" y=".7" width="20.600" height="20.600" stroke="#fff" strokeWidth="1.400" /><path d="M1 19l7-11 4 6 3-4 6 8v3H1z" fill="#fff" /></S>, u: 1 },
];
const tray = [
  [<path d="M8 5.500a3 3 0 1 0 6 0 3 3 0 1 0-6 0M12 9c3 1 4 2 4 4M3.500 9.500a2.500 2.500 0 1 0 5 0 2.500 2.500 0 1 0-5 0M1.500 17c0-6 9-6 9 0" stroke="#fff" strokeWidth="1.200" />, "w-[49px]"],
  [<g><rect x="1" y="1" width="15" height="15" rx="2" fill="#2f8fd4" /><path d="M3 5c3-3 8-2 10 1M5 8h6v6H5zM7 10h3v3" stroke="#cfeaff" strokeWidth="1.100" /><path d="M12 14l4-4" stroke="#f0c83a" strokeWidth="2" /></g>, "w-[24px]"],
  [<g><path d="M8 1c2 1 4 2 6 2 0 6-1 9-6 12C3 12 2 9 2 3c2 0 4-1 6-2z" fill="#fff" /><path d="M8 1v14M2 7h12" stroke="#222" /><rect x="8" y="8" width="8.500" height="8.500" rx="4" fill="#d8232a" /><path d="M10.500 10.500l3.500 3.500M14 10.500l-3.500 3.500" stroke="#fff" strokeWidth="1.200" /></g>, "w-[24px]"],
  [<g><rect x="1" y="5" width="13" height="8" stroke="#fff" /><path d="M3 7h5v4H3zM14.500 7H16v4h-1.500z" fill="#fff" /></g>, "w-[24px]"],
  [<g><rect x="1" y="1" width="15" height="15" fill="#1374d4" /><circle cx="8.500" cy="8.500" r="6" fill="#fff" /><path d="M2.500 8.500L6 6v1.500h5V6l3.500 2.500L11 11V9.500H6V11z" fill="#1374d4" /></g>, "w-[24px]"],
  [<g stroke="#ccd4c8" strokeWidth=".9"><circle cx="8.500" cy="8.500" r="7" fill="#76886b" /><ellipse cx="8.500" cy="8.500" rx="3" ry="7" /><path d="M1.500 8.500h14M8.500 1.500v14" /></g>, "w-[24px]"],
  [<g><rect x="1" y="1" width="15" height="15" rx="2" fill="#28b294" /><path d="M13 8V5H4v7h5" stroke="#fff" strokeWidth="1.500" /><circle cx="11.500" cy="10.500" r="2.500" fill="#fff" /></g>, "w-[24px]"],
  [<g><circle cx="8.500" cy="8.500" r="7.500" fill="#d9090f" /><path d="M5.500 11.500V6.500l3 3 3-3v5" stroke="#fff" strokeWidth="1.600" /></g>, "w-[24px]"],
  [<path d="M1 6.500h2.500l3-3v10l-3-3H1zM9 6.500c1 1 1 3 0 4M11.500 4.500c2 2 2 6 0 8M14 3c3 3 3 8 0 11" stroke="#fff" strokeWidth="1.100" />, "w-[24px]"],
  [<path d="M2 14C3 8 8 4 14 3M5 14c1-5 4-7 9-8M8 14c1-3 3-5 6-5M11 14c1-2 2-2 3-2" stroke="#eee" strokeWidth="1.200" />, "w-[24px]"],
];
const TaskBar = () => (
  <div className="flex h-[40px] shrink-0 items-center bg-linear-to-r from-[#0d1110] via-[#222606] via-35% to-[#24260b] text-white">
    {tasks.map((t, i) => (
      <div key={i} className={"relative flex h-full shrink-0 items-center justify-center " + (t.w || "w-[49px]") + (t.q ? " bg-[#53573b]" : "")}>
        {t.i}
        {t.u && <div className="absolute bottom-0 h-[2px] w-[40px] bg-[#76b9ed]" />}
        {t.q && <div className="absolute bottom-0 h-[2px] w-full bg-[#76b9ed]" />}
      </div>
    ))}
    <div className="ml-auto flex h-full items-center font-['Open_Sans',sans-serif] text-[12px]">
      {tray.map(([g, c], i) => <div key={i} className={"flex shrink-0 justify-center " + c}><S s={17}>{g}</S></div>)}
      <div className="flex w-[24px] justify-center"><FaDropbox size={17} /></div>
      <S w={24} h={14} className="ml-[3px]"><rect x=".6" y=".6" width="21.800" height="12" stroke="#fff" strokeWidth="1.200" /><path d="M3 4h17M3 7h17" stroke="#fff" strokeWidth="1.500" strokeDasharray="1.500 1.500" /><path d="M6 10h11" stroke="#fff" /></S>
      <T w={23} className="ml-[10px]">ENG</T>
      <div className="ml-[12px] flex w-[53px] flex-col items-center leading-[18px]"><T w={42}>4:18 PM</T><T w={52}>7/26/2019</T></div>
      <S w={17} h={17} className="ml-[17px]"><path d="M1 1h15v11h-4.500v3.500L8 12H1z" stroke="#fff" strokeWidth="1.200" /></S>
      <div className="ml-[20px] mr-[4px] h-full w-[1px] bg-[#6b6c5c]" />
    </div>
  </div>
);

const menus = [["Project", 35], ["Edit", 18], ["View", 21], ["Layer", 27], ["Settings", 39], ["Plugins", 33], ["Vector", 29], ["Raster", 32], ["Database", 46], ["Web", 22], ["SCP", 19], ["Processing", 51], ["Help", 22]];

export default function App() {
  return (
    <div className="flex h-[768px] w-[1366px] flex-col overflow-hidden bg-[#efefef] font-['DejaVu_Sans_Condensed','DejaVu_Sans',sans-serif] text-[11px] leading-[14px] text-black">
      <div className="flex h-[24px] shrink-0 items-center bg-white pl-[3px] font-['Open_Sans',sans-serif] text-[12px]">
        <Qgis s={16} />
        <T w={65} className="ml-[4px]">QGIS 2.18.22</T>
        <div className="-mt-[3px] ml-auto flex items-center gap-[36px] pr-[20px]">
          <S w={10} h={10}><path d="M0 5.500h10" stroke="#000" /></S>
          <S w={10} h={10}><path d="M.5 2.500h7v7h-7zM2.500 2.500v-2h7v7h-2" stroke="#000" /></S>
          <S w={10} h={10}><path d="M0 0l10 10M10 0L0 10" stroke="#000" strokeWidth="1.100" /></S>
        </div>
      </div>
      <div className="grid h-[21px] shrink-0 grid-cols-[49px_34px_36px_42px_54px_48px_45px_47px_61px_37px_34px_66px_40px] items-center pt-[2px] pl-[9px]">
        {menus.map(([m, w]) => <T key={m} w={w} className="justify-self-start">{m}</T>)}
      </div>
      <Bar>
        <FirstGrip /><Cells list={row1} /><VGrip />
        <Cells list={row1b.slice(0, 1)} />
        <div className="flex h-[33px] w-[35px] shrink-0 items-center justify-center rounded-[3px] border border-[#9b9b9b] bg-[#d6d6d6]"><S>{row1b[1]}</S></div>
        <Cells list={row1b.slice(2)} />
        <div className="flex w-[35px] justify-center"><Refresh /></div>
        <VGrip /><Cells list={[help]} />
      </Bar>
      <Bar>
        <FirstGrip /><Cells list={row2} /><Cells list={[lineStar]} />
        <div className="flex w-[12px] shrink-0 justify-center"><Down c="#777" /></div>
        <Cells list={row2b} /><VGrip /><Cells list={row2c} /><VGrip /><Cells list={row2d} /><VGrip /><Cells list={[csw]} /><VGrip /><Cells list={row2e} />
      </Bar>
      <Bar>
        <FirstGrip /><Cells list={row3} /><Cells list={[rotShape]} />
        <div className="flex w-[12px] shrink-0 justify-center"><Down c="#777" /></div>
        <VGrip /><Cells list={row3b} />
        <More className="mr-[5px] ml-[23px]" /><VGrip /><div className="-ml-[4px] flex shrink-0"><Cells narrow list={row3c} /></div>
        <More className="mr-[5px] ml-[7px]" /><VGrip /><div className="-ml-[4px] flex shrink-0"><Cells narrow list={[scp]} /></div><More className="mr-[5px] ml-[3px]" /><VGrip /><div className="-ml-[4px] flex shrink-0"><Cells narrow list={[gridIc]} /></div><More className="ml-[3px]" />
      </Bar>
      <div className="flex h-[536px] shrink-0 border-t border-[#b5b5b5]">
        <SideBar />
        <LeftDock />
        <div className="flex h-full w-[7px] shrink-0 items-center justify-center"><Dots w={3} h={170} className="-mt-[5px]" /></div>
        <div className="flex h-full w-[982px] shrink-0 flex-col pt-[1px]"><MapView /><TimeManager /></div>
        <div className="flex h-full w-[6px] shrink-0 items-center justify-center"><Dots w={3} h={170} className="-mt-[5px]" /></div>
        <RightDock />
      </div>
      <StatusBar />
      <TaskBar />
    </div>
  );
}
